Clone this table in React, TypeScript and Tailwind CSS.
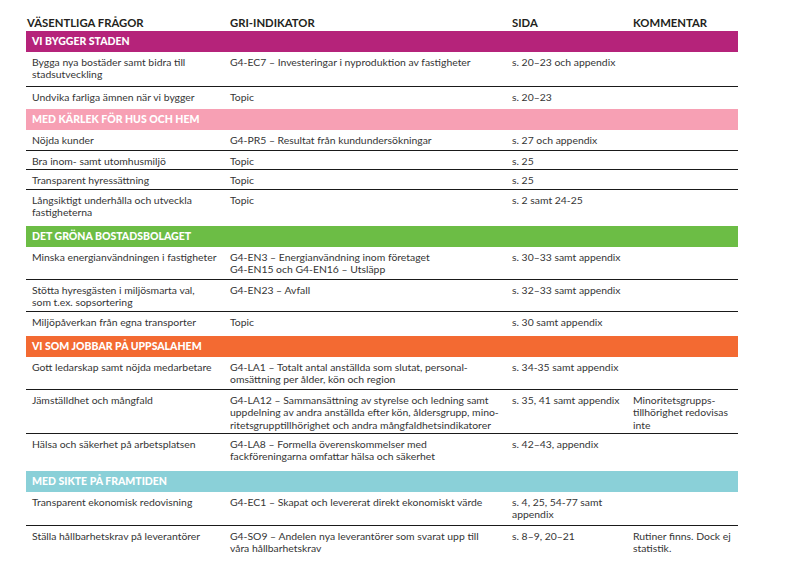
import React from "react";

type Row = { h: number; c: React.ReactNode[] };
type Section = { title: string; color: string; rows: Row[] };

const sections: Section[] = [
  {
    title: "VI BYGGER STADEN",
    color: "bg-[#b5237a]",
    rows: [
      { h: 35, c: [<>Bygga nya bostäder samt bidra till<br />stadsutveckling</>, "G4-EC7 – Investeringar i nyproduktion av fastigheter", "s. 20–23 och appendix", ""] },
      { h: 22, c: ["Undvika farliga ämnen när vi bygger", "Topic", "s. 20–23", ""] },
    ],
  },
  {
    title: "MED KÄRLEK FÖR HUS OCH HEM",
    color: "bg-[#f7a0b4]",
    rows: [
      { h: 21, c: ["Nöjda kunder", "G4-PR5 – Resultat från kundundersökningar", "s. 27 och appendix", ""] },
      { h: 19, c: ["Bra inom- samt utomhusmiljö", "Topic", "s. 25", ""] },
      { h: 20, c: ["Transparent hyressättning", "Topic", "s. 25", ""] },
      { h: 36, c: [<>Långsiktigt underhålla och utveckla<br />fastigheterna</>, "Topic", "s. 2 samt 24-25", ""] },
    ],
  },
  {
    title: "DET GRÖNA BOSTADSBOLAGET",
    color: "bg-[#6cbd45]",
    rows: [
      { h: 33, c: ["Minska energianvändningen i fastigheter", <>G4-EN3 – Energianvändning inom företaget<br />G4-EN15 och G4-EN16 – Utsläpp</>, "s. 30–33 samt appendix", ""] },
      { h: 32, c: [<>Stötta hyresgästen i miljösmarta val,<br />som t.ex. sopsortering</>, "G4-EN23 – Avfall", "s. 32–33 samt appendix", ""] },
      { h: 24, c: ["Miljöpåverkan från egna transporter", "Topic", "s. 30 samt appendix", ""] },
    ],
  },
  {
    title: "VI SOM JOBBAR PÅ UPPSALAHEM",
    color: "bg-[#f36a32]",
    rows: [
      { h: 33, c: ["Gott ledarskap samt nöjda medarbetare", <>G4-LA1 – Totalt antal anställda som slutat, personal-<br />omsättning per ålder, kön och region</>, "s. 34-35 samt appendix", ""] },
      { h: 44, c: ["Jämställdhet och mångfald", <>G4-LA12 – Sammansättning av styrelse och ledning samt<br />uppdelning av andra anställda efter kön, åldersgrupp, mino-<br />ritetsgrupptillhörighet och andra mångfaldhetsindikatorer</>, "s. 35, 41 samt appendix", <>Minoritetsgrupps-<br />tillhörighet redovisas<br />inte</>] },
      { h: 37, c: ["Hälsa och säkerhet på arbetsplatsen", <>G4-LA8 – Formella överenskommelser med<br />fackföreningarna omfattar hälsa och säkerhet</>, "s. 42–43, appendix", ""] },
    ],
  },
  {
    title: "MED SIKTE PÅ FRAMTIDEN",
    color: "bg-[#8ad0d8]",
    rows: [
      { h: 34, c: ["Transparent ekonomisk redovisning", "G4-EC1 – Skapat och levererat direkt ekonomiskt värde", <>s. 4, 25, 54-77 samt<br />appendix</>, ""] },
      { h: 36, c: ["Ställa hållbarhetskrav på leverantörer", <>G4-SO9 – Andelen nya leverantörer som svarat upp till<br />våra hållbarhetskrav</>, "s. 8–9, 20–21", <>Rutiner finns. Dock ej<br />statistik.</>] },
    ],
  },
];

const grid = "grid grid-cols-[198px_282px_121px_1fr]";

export default function App() {
  return (
    <div
      className="w-[785px] h-[586px] bg-white overflow-hidden"
      style={{ fontFamily: "Lato, 'Open Sans', sans-serif" }}
    >
      <div className="ml-[26px] w-[712px] pt-[15px]">
        <div className={`${grid} h-[16px] items-center text-[11.3px] font-bold text-[#231f20] leading-none pl-[1px]`}>
          <div>VÄSENTLIGA FRÅGOR</div>
          <div className="pl-[5px]">GRI-INDIKATOR</div>
          <div className="pl-[5px]">SIDA</div>
          <div className="pl-[5px]">KOMMENTAR</div>
        </div>
        {sections.map((s, si) => (
          <div key={si}>
            <div className={`${s.color} h-[21px] flex items-center pl-[6px] text-white font-black text-[10.5px]`}>
              {s.title}
            </div>
            {s.rows.map((r, ri) => (
              <div
                key={ri}
                className={`${grid} pl-[6px] pt-[3.5px] text-[10.4px] leading-[12.5px] text-[#353535] ${ri < s.rows.length - 1 ? "border-b border-[#1a1a1a]" : ""}`}
                style={{ height: r.h }}
              >
                {r.c.map((cell, ci) => (
                  <div key={ci}>{cell}</div>
                ))}
              </div>
            ))}
          </div>
        ))}
      </div>
    </div>
  );
}
